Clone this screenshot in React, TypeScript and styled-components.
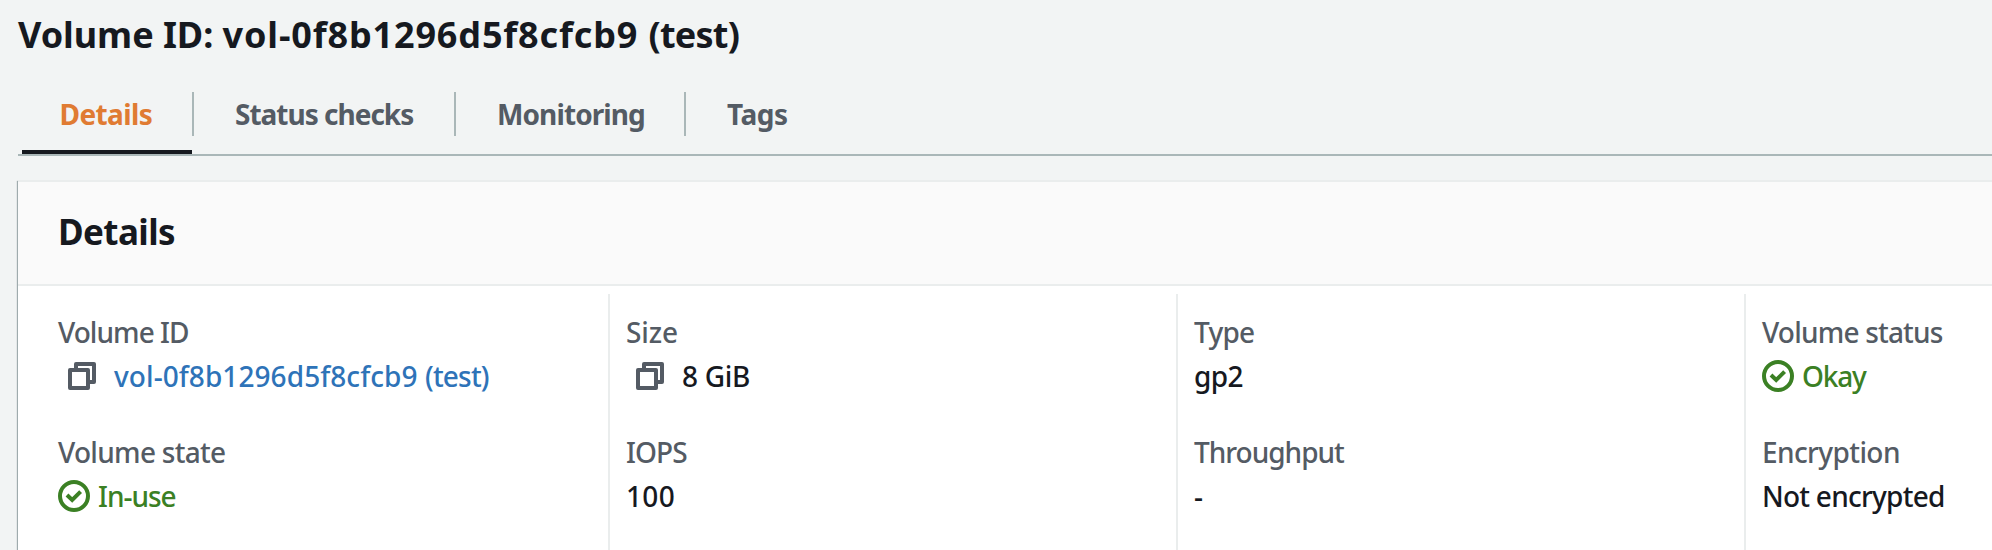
import React from "react";
import styled, { createGlobalStyle } from "styled-components";

const GlobalStyle = createGlobalStyle`
  * { box-sizing: border-box; }
  body {
    margin: 0;
    overflow: hidden;
    background: #f2f4f4;
    color: #16191f;
    font-family: "Noto Sans", sans-serif;
    font-size: 28px;
    font-weight: 500;
    line-height: 44px;
  }
`;

const Page = styled.main`
  height: 550px;
  padding: 13px 0 0 18px;
  overflow: hidden;
  white-space: nowrap;
`;

const Title = styled.h1`
  margin: 0;
  font-size: 36px;
  font-weight: 700;
`;

const Spaced = styled.span<{ $spacing: number }>`
  letter-spacing: ${(p) => p.$spacing}px;
`;

const Tabs = styled.nav`
  display: flex;
  height: 99px;
  padding: 35px 0 0 4px;
  border-bottom: 2px solid #aab7b8;
`;

const Tab = styled.a<{ $active?: boolean; $width: number }>`
  display: flex;
  align-items: flex-start;
  width: ${(p) => p.$width}px;
  height: 62px;
  padding-left: ${(p) => (p.$active ? 37.5 : 41)}px;
  border-bottom: ${(p) => (p.$active ? "4px solid #16191f" : "none")};
  color: ${(p) => (p.$active ? "#e07b32" : "#545b64")};
  font-weight: 700;
`;

const Divider = styled.i`
  width: 2px;
  height: 44px;
  background: #aab7b8;
`;

const Card = styled.section`
  margin-top: 24px;
  border-top: 2px solid #eaeded;
  background: #fff;
  box-shadow: -1px 1px 1px rgba(0, 28, 36, 0.34);
`;

const CardHeader = styled.header`
  height: 104px;
  padding: 28px 40px;
  border-bottom: 2px solid #eaeded;
  background: #fafafa;
`;

const CardTitle = styled.h2`
  margin: 0;
  font-size: 35px;
  font-weight: 700;
  letter-spacing: -0.6px;
`;

const Columns = styled.div`
  display: grid;
  grid-template-columns: 590px 568px 568px 568px;
  padding-top: 8px;
`;

const Column = styled.div<{ $first?: boolean }>`
  display: flex;
  flex-direction: column;
  gap: 32px;
  height: 290px;
  padding: 16px 0 0 ${(p) => (p.$first ? 40 : 16)}px;
  border-left: ${(p) => (p.$first ? "none" : "2px solid #eaeded")};
`;

const Label = styled.div<{ $spacing: number }>`
  color: #545b64;
  letter-spacing: ${(p) => p.$spacing}px;
`;

type Tone = "plain" | "link" | "success";
const tones: Record<Tone, string> = { plain: "#16191f", link: "#2e73b8", success: "#3b8024" };

const Value = styled.div<{ $tone: Tone }>`
  display: flex;
  height: 44px;
  color: ${(p) => tones[p.$tone]};
  white-space: pre;
`;

const CopyGlyph = styled.svg`
  width: 28px;
  height: 28px;
  margin: 8px 18px 0 10px;
`;

const StatusGlyph = styled.svg`
  width: 32px;
  height: 32px;
  margin: 6px 8px 0 0;
`;

const CopyIcon = () => (
  <CopyGlyph viewBox="0 0 28 28" fill="none" stroke="#545b64" strokeWidth="4" strokeLinejoin="round">
    <path d="M8 6V2H26V20H22" />
    <path d="M2 8H20V26H2Z" />
  </CopyGlyph>
);

const StatusIcon = () => (
  <StatusGlyph viewBox="0 0 32 32" fill="none" stroke="currentColor" strokeWidth="4">
    <circle cx="16" cy="16" r="14" />
    <path d="M9 15L14.2 20L22.6 11.7" />
  </StatusGlyph>
);

type Run = [text: string, spacing: number];

interface FieldData {
  label: Run;
  value: Run[];
  tone?: Tone;
  icon?: "copy" | "status";
}

const columns: FieldData[][] = [
  [
    { label: ["Volume ID", -0.95], value: [["vol-0f8b1296d5f8cfcb9 ", 0.07], ["(test)", -0.8]], tone: "link", icon: "copy" },
    { label: ["Volume state", -0.7], value: [["In-use", -1]], tone: "success", icon: "status" },
  ],
  [
    { label: ["Size", -0.1], value: [["8 GiB", -0.3]], icon: "copy" },
    { label: ["IOPS", -0.9], value: [["100", 0.3]] },
  ],
  [
    { label: ["Type", -0.75], value: [["gp2", -0.6]] },
    { label: ["Throughput", -1], value: [["-", 0]] },
  ],
  [
    { label: ["Volume status", -0.8], value: [["Okay", -1.2]], tone: "success", icon: "status" },
    { label: ["Encryption", -0.6], value: [["Not encrypted", -0.75]] },
  ],
];

const titleRuns: Run[] = [
  ["Volume ID: ", -0.05],
  ["vol-0f8b1296d5f8cfcb9 ", 0.85],
  ["(test)", -0.75],
];

const Runs = ({ runs }: { runs: Run[] }) => (
  <>
    {runs.map(([text, spacing]) => (
      <Spaced key={text} $spacing={spacing}>
        {text}
      </Spaced>
    ))}
  </>
);

const Field = ({ label, value, tone = "plain", icon }: FieldData) => (
  <div>
    <Label $spacing={label[1]}>{label[0]}</Label>
    <Value $tone={tone}>
      {icon === "copy" && <CopyIcon />}
      {icon === "status" && <StatusIcon />}
      <Runs runs={value} />
    </Value>
  </div>
);

const tabs = [
  { name: "Details", width: 170, spacing: -0.6 },
  { name: "Status checks", width: 260, spacing: -1 },
  { name: "Monitoring", width: 228, spacing: -0.9 },
  { name: "Tags", width: 140, spacing: -0.45 },
];

export default function App() {
  return (
    <Page>
      <GlobalStyle />
      <Title>
        <Runs runs={titleRuns} />
      </Title>
      <Tabs>
        {tabs.map((tab, i) => (
          <React.Fragment key={tab.name}>
            {i > 0 && <Divider />}
            <Tab $active={i === 0} $width={tab.width}>
              <Spaced $spacing={tab.spacing}>{tab.name}</Spaced>
            </Tab>
          </React.Fragment>
        ))}
      </Tabs>
      <Card>
        <CardHeader>
          <CardTitle>Details</CardTitle>
        </CardHeader>
        <Columns>
          {columns.map((fields, i) => (
            <Column key={i} $first={i === 0}>
              {fields.map((field) => (
                <Field key={field.label[0]} {...field} />
              ))}
            </Column>
          ))}
        </Columns>
      </Card>
    </Page>
  );
}
